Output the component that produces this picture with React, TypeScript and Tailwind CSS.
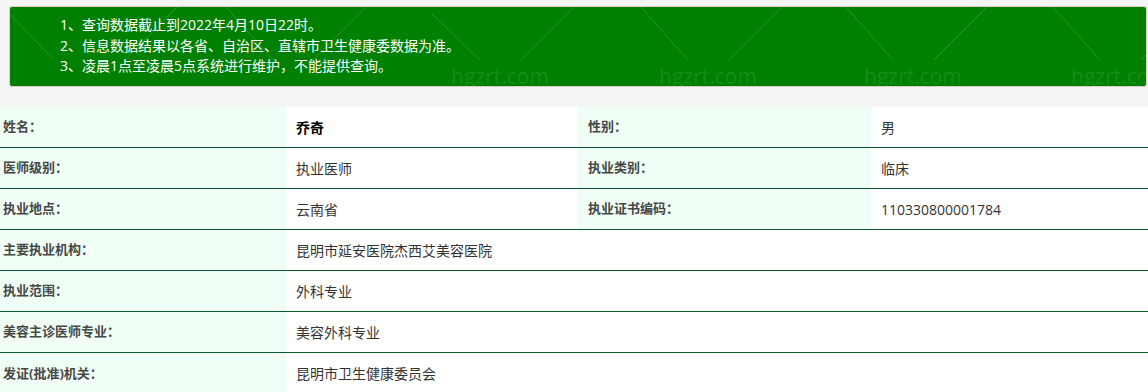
const notices = [
  "1、查询数据截止到2022年4月10日22时。",
  "2、信息数据结果以各省、自治区、直辖市卫生健康委数据为准。",
  "3、凌晨1点至凌晨5点系统进行维护，不能提供查询。",
];

const pairs = [
  [
    { label: "姓名：", value: "乔奇", strong: true },
    { label: "性别：", value: "男" },
  ],
  [
    { label: "医师级别：", value: "执业医师" },
    { label: "执业类别：", value: "临床" },
  ],
  [
    { label: "执业地点：", value: "云南省" },
    { label: "执业证书编码：", value: "110330800001784" },
  ],
];

const wide = [
  { label: "主要执业机构：", value: "昆明市延安医院杰西艾美容医院" },
  { label: "执业范围：", value: "外科专业" },
  { label: "美容主诊医师专业：", value: "美容外科专业" },
  { label: "发证(批准)机关：", value: "昆明市卫生健康委员会" },
];

// faint watermark units (V shape + site name) across the top
const marks = [500, 708, 913, 1120];

const Watermark = () => (
  <svg className="pointer-events-none absolute left-0 top-0" width="1148" height="392">
    <g stroke="#ffffff" strokeOpacity="0.16" strokeWidth="1">
      <line x1="8" y1="12" x2="52" y2="58" />
      <line x1="125" y1="60" x2="178" y2="6" />
      <line x1="225" y1="6" x2="273" y2="60" />
      <line x1="313" y1="60" x2="367" y2="6" />
      {marks.map((c) => (
        <g key={c}>
          <line x1={c - 68} y1={c === 500 ? 14 : 6} x2={c - 20} y2={60} />
          <line x1={c + 21} y1={60} x2={c + 75} y2={6} />
        </g>
      ))}
    </g>
    {marks.map((c) => (
      <text
        key={c}
        x={c}
        y={84}
        textAnchor="middle"
        fontSize="21"
        fontFamily="'Open Sans', sans-serif"
        fill="#ffffff"
        fillOpacity="0.1"
      >
        hgzrt.com
      </text>
    ))}
  </svg>
);

const App = () => {
  return (
    <div className="relative min-h-screen overflow-hidden bg-[#f5f5f5] font-['Open_Sans','Noto_Sans_CJK_SC',sans-serif]">
      {/* Notice */}
      <div className="pb-5 pl-[9px] pr-[1px] pt-[6px]">
        <div className="h-[81px] overflow-hidden rounded-[3px] border border-[#e2cdc6] bg-[#008000] pl-[50px] pt-[8px] text-[14px] leading-[20.5px] text-white">
          {notices.map((n) => (
            <p key={n}>{n}</p>
          ))}
        </div>
      </div>

      {/* Info table */}
      <div className="bg-white">
        {pairs.map((row, i) => (
          <div key={i} className="grid h-[41px] grid-cols-[286px_292px_293px_1fr] border-b border-[#0b5e30]">
            <div className="flex items-center bg-[#efFFF6] pl-[3px] text-[13px] font-bold text-[#474747]">{row[0].label}</div>
            <div className={`flex items-center pl-[10px] text-[14px] ${row[0].strong ? "font-bold text-black" : "text-[#333]"}`}>
              {row[0].value}
            </div>
            <div className="flex items-center bg-[#efFFF6] pl-[10px] text-[13px] font-bold text-[#474747]">{row[1].label}</div>
            <div className="flex items-center pl-[10px] text-[14px] text-[#333]">{row[1].value}</div>
          </div>
        ))}
        {wide.map((r, i) => (
          <div
            key={r.label}
            className={`grid h-[41px] grid-cols-[286px_1fr] ${i < wide.length - 1 ? "border-b border-[#0b5e30]" : ""}`}
          >
            <div className="flex items-center bg-[#efFFF6] pl-[3px] text-[13px] font-bold text-[#474747]">{r.label}</div>
            <div className="flex items-center pl-[10px] text-[14px] text-[#333]">{r.value}</div>
          </div>
        ))}
      </div>

      <Watermark />
    </div>
  );
};

export default App;
